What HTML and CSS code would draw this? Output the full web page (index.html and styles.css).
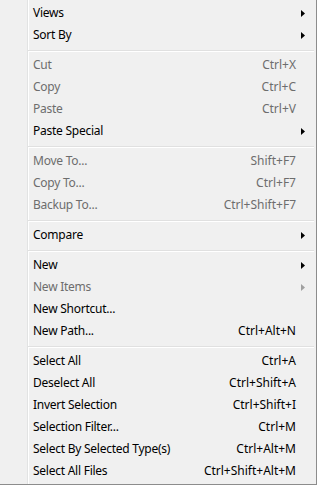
FILE: index.html
```html
<!DOCTYPE html>
<html lang="en">
<head>
<meta charset="UTF-8">
<title>Context Menu</title>
<link rel="stylesheet" href="styles.css">
</head>
<body>
<div class="menu">
    <div class="item"><span class="label">Views</span><span class="key"></span><span class="sub"><svg width="4" height="7"><polygon points="0,0 4,3.5 0,7"/></svg></span></div>
    <div class="item"><span class="label">Sort By</span><span class="key"></span><span class="sub"><svg width="4" height="7"><polygon points="0,0 4,3.5 0,7"/></svg></span></div>
    <div class="sep"></div>
    <div class="item disabled"><span class="label">Cut</span><span class="key">Ctrl+X</span><span class="sub"></span></div>
    <div class="item disabled"><span class="label">Copy</span><span class="key">Ctrl+C</span><span class="sub"></span></div>
    <div class="item disabled"><span class="label">Paste</span><span class="key">Ctrl+V</span><span class="sub"></span></div>
    <div class="item"><span class="label">Paste Special</span><span class="key"></span><span class="sub"><svg width="4" height="7"><polygon points="0,0 4,3.5 0,7"/></svg></span></div>
    <div class="sep"></div>
    <div class="item disabled"><span class="label">Move To...</span><span class="key">Shift+F7</span><span class="sub"></span></div>
    <div class="item disabled"><span class="label">Copy To...</span><span class="key">Ctrl+F7</span><span class="sub"></span></div>
    <div class="item disabled"><span class="label">Backup To...</span><span class="key">Ctrl+Shift+F7</span><span class="sub"></span></div>
    <div class="sep"></div>
    <div class="item"><span class="label">Compare</span><span class="key"></span><span class="sub"><svg width="4" height="7"><polygon points="0,0 4,3.5 0,7"/></svg></span></div>
    <div class="sep"></div>
    <div class="item"><span class="label">New</span><span class="key"></span><span class="sub"><svg width="4" height="7"><polygon points="0,0 4,3.5 0,7"/></svg></span></div>
    <div class="item disabled"><span class="label">New Items</span><span class="key"></span><span class="sub"><svg width="4" height="7"><polygon points="0,0 4,3.5 0,7"/></svg></span></div>
    <div class="item"><span class="label">New Shortcut...</span><span class="key"></span><span class="sub"></span></div>
    <div class="item"><span class="label">New Path...</span><span class="key">Ctrl+Alt+N</span><span class="sub"></span></div>
    <div class="sep"></div>
    <div class="item"><span class="label">Select All</span><span class="key">Ctrl+A</span><span class="sub"></span></div>
    <div class="item"><span class="label">Deselect All</span><span class="key">Ctrl+Shift+A</span><span class="sub"></span></div>
    <div class="item"><span class="label">Invert Selection</span><span class="key">Ctrl+Shift+I</span><span class="sub"></span></div>
    <div class="item"><span class="label">Selection Filter...</span><span class="key">Ctrl+M</span><span class="sub"></span></div>
    <div class="item"><span class="label">Select By Selected Type(s)</span><span class="key">Ctrl+Alt+M</span><span class="sub"></span></div>
    <div class="item"><span class="label">Select All Files</span><span class="key">Ctrl+Shift+Alt+M</span><span class="sub"></span></div>
</div>
</body>
</html>
```

FILE: styles.css
```css
body, html {
    margin: 0;
    background-color: #fff;
}

.menu {
    width: 316px;
    padding: 2px 0 2px 0;
    border-right: 1px solid #8c8c8c;
    border-bottom: 1px solid #8c8c8c;
    font-family: "Noto Sans", Arial, sans-serif;
    font-size: 12px;
    color: #000;
    /* icon gutter: grey line then white line */
    background: linear-gradient(to right, transparent 27px, #e2e3e3 27px, #e2e3e3 28px, #fff 28px, #fff 29px, transparent 29px), #f0f0f0;
}

.item {
    display: flex;
    align-items: center;
    height: 22px;
    line-height: 22px;
    padding-left: 33px;
    white-space: nowrap;
}

.item .label {
    flex: 1;
    letter-spacing: -0.25px;
}

.item .key {
    text-align: right;
}

.item .sub {
    width: 20px;
    display: flex;
    align-items: center;
    padding-left: 5px;
    box-sizing: border-box;
}

.item .sub svg {
    fill: #000;
}

.item.disabled {
    color: #6d6d6d;
}

.item.disabled .sub svg {
    fill: #a0a0a0;
}

.sep {
    height: 8px;
    margin: 0 2px 0 28px;
    background: linear-gradient(to bottom, transparent 4px, #e0e0e0 4px, #e0e0e0 5px, #fff 5px, #fff 6px, transparent 6px);
}
```
